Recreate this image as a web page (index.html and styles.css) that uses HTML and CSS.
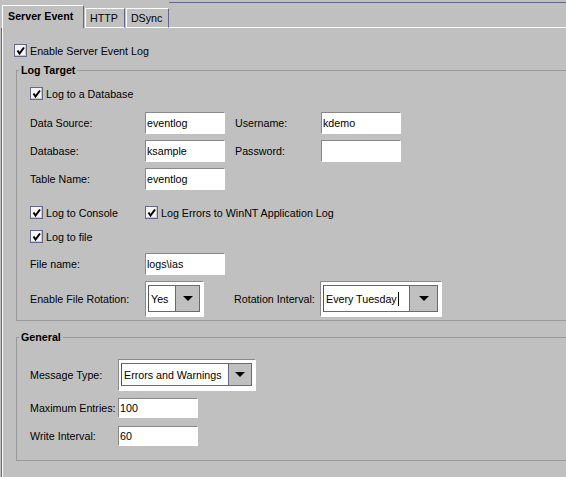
FILE: index.html
```html
<!DOCTYPE html>
<html lang="en">
<head>
    <meta charset="UTF-8">
    <title>Server Event</title>
    <link rel="stylesheet" href="styles.css">
</head>
<body>
    <div class="tabs">
        <div class="tab active">Server Event</div>
        <div class="tab">HTTP</div>
        <div class="tab">DSync</div>
        <div class="tab-fill"></div>
    </div>

    <div class="panel">
        <div class="check enable-log">
            <span class="box"><svg viewBox="0 0 11 11" width="11" height="11"><polyline points="2.5,5.5 4.5,8.5 9,2.5" /></svg></span>
            Enable Server Event Log
        </div>

        <div class="group log-target">
            <div class="group-title">Log Target</div>

            <div class="check db-check">
                <span class="box"><svg viewBox="0 0 11 11" width="11" height="11"><polyline points="2.5,5.5 4.5,8.5 9,2.5" /></svg></span>
                Log to a Database
            </div>

            <div class="form-grid">
                <span class="label">Data Source:</span>
                <input class="field" type="text" value="eventlog">
                <span class="label">Username:</span>
                <input class="field" type="text" value="kdemo">

                <span class="label">Database:</span>
                <input class="field" type="text" value="ksample">
                <span class="label">Password:</span>
                <input class="field" type="text" value="">

                <span class="label">Table Name:</span>
                <input class="field" type="text" value="eventlog">
            </div>

            <div class="check-row">
                <div class="check console-check">
                    <span class="box"><svg viewBox="0 0 11 11" width="11" height="11"><polyline points="2.5,5.5 4.5,8.5 9,2.5" /></svg></span>
                    Log to Console
                </div>
                <div class="check">
                    <span class="box"><svg viewBox="0 0 11 11" width="11" height="11"><polyline points="2.5,5.5 4.5,8.5 9,2.5" /></svg></span>
                    Log Errors to WinNT Application Log
                </div>
            </div>

            <div class="check file-check">
                <span class="box"><svg viewBox="0 0 11 11" width="11" height="11"><polyline points="2.5,5.5 4.5,8.5 9,2.5" /></svg></span>
                Log to file
            </div>

            <div class="row file-row">
                <span class="label wide">File name:</span>
                <input class="field" type="text" value="logs\ias">
            </div>

            <div class="row combo-row">
                <span class="label wide">Enable File Rotation:</span>
                <div class="combo-frame yes-combo">
                    <div class="combo">
                        <span class="combo-text">Yes</span>
                        <span class="combo-btn"><span class="arrow"></span></span>
                    </div>
                </div>
                <span class="label rotation-label">Rotation Interval:</span>
                <div class="combo-frame rotation-combo">
                    <div class="combo">
                        <span class="combo-text">Every Tuesday<span class="caret"></span></span>
                        <span class="combo-btn"><span class="arrow"></span></span>
                    </div>
                </div>
            </div>
        </div>

        <div class="group general">
            <div class="group-title">General</div>

            <div class="row message-row">
                <span class="label short">Message Type:</span>
                <div class="combo-frame message-combo">
                    <div class="combo">
                        <span class="combo-text">Errors and Warnings</span>
                        <span class="combo-btn"><span class="arrow"></span></span>
                    </div>
                </div>
            </div>

            <div class="row entries-row">
                <span class="label short">Maximum Entries:</span>
                <input class="field small" type="text" value="100">
            </div>

            <div class="row interval-row">
                <span class="label short">Write Interval:</span>
                <input class="field small" type="text" value="60">
            </div>
        </div>
    </div>
</body>
</html>
```

FILE: styles.css
```css
body {
    margin: 0;
    width: 566px;
    height: 477px;
    overflow: hidden;
    background-color: #c0c0c0;
    font-family: "Liberation Sans", Arial, sans-serif;
    font-size: 10.7px;
    color: #000;
}

/* tab strip */
.tabs {
    display: flex;
    align-items: flex-end;
    height: 28px;
    padding-left: 2px;
}
.tab {
    box-sizing: border-box;
    height: 20px;
    line-height: 18px;
    padding: 0 6px 0 4px;
    border-top: 1px solid #fff;
    border-left: 1px solid #fff;
    border-right: 1px solid #66668a;
    border-bottom: 1px solid #fff;
}
.tab.active {
    height: 23px;
    line-height: 20px;
    width: 82px;
    padding-left: 5px;
    font-weight: bold;
    border-bottom: none;
}
.tab + .tab {
    margin-left: 1px;
}
.tab-fill {
    flex: 1;
    box-sizing: border-box;
    height: 26px;
    border-top: 1px solid #66668a;
    border-bottom: 1px solid #fff;
}

/* tab body */
.panel {
    margin-left: 1px;
    height: 449px;
    border-left: 1px solid #66668a;
    box-shadow: inset 1px 0 #fff;
    padding-left: 1px;
    display: flex;
    flex-direction: column;
}

/* checkboxes */
.check {
    display: flex;
    align-items: center;
    gap: 3px;
    height: 13px;
    white-space: nowrap;
}
.box {
    box-sizing: border-box;
    width: 13px;
    height: 13px;
    border: 1px solid #66668a;
    background-color: #f4f4f4;
    box-shadow: inset -1px -1px #c8c8c8;
    display: flex;
}
.box polyline {
    fill: none;
    stroke: #000;
    stroke-width: 2;
}
.enable-log {
    margin: 16px 0 0 11px;
}

/* titled groups */
.group {
    display: flex;
    flex-direction: column;
    margin: 13px 0 0 13px;
    padding-left: 13px;
    border: 1px solid #999;
    border-right: none;
}
.group-title {
    align-self: flex-start;
    margin: -7px 0 0 -11px;
    padding: 0 2px;
    line-height: 13px;
    font-weight: bold;
    background-color: #c0c0c0;
}
.log-target {
    padding-bottom: 3px;
}
.general {
    margin-top: 16px;
    padding-bottom: 14px;
}

.db-check {
    margin-top: 10px;
}
.form-grid {
    display: grid;
    grid-template-columns: 115px 90px 86px 80px;
    grid-auto-rows: 22px;
    row-gap: 6px;
    align-items: center;
    margin-top: 12px;
}
.check-row {
    display: flex;
    margin-top: 16px;
}
.console-check {
    width: 115px;
}
.file-check {
    margin-top: 11px;
}

/* label + control rows */
.row {
    display: flex;
    align-items: center;
}
.label {
    white-space: nowrap;
}
.label.wide {
    width: 115px;
}
.label.short {
    width: 88px;
}
.file-row {
    margin-top: 10px;
}
.combo-row {
    margin-top: 6px;
}
.rotation-label {
    width: 86px;
    margin-left: 30px;
}
.message-row {
    margin-top: 15px;
}
.entries-row {
    margin-top: 7px;
}
.interval-row {
    margin-top: 8px;
}

/* text fields */
.field {
    box-sizing: border-box;
    width: 80px;
    height: 22px;
    margin: 0;
    padding: 0 1px;
    border: 1px solid #fff;
    border-top-color: #888;
    border-left-color: #888;
    background-color: #fff;
    font: inherit;
    color: #000;
    outline: none;
}
.field.small {
    height: 20px;
}

/* combo boxes */
.combo-frame {
    box-sizing: border-box;
    height: 36px;
    padding: 3px 3px 4px 2px;
    border: 1px solid #fff;
    border-top-color: #8a8a8a;
    border-left-color: #8a8a8a;
    background-color: #fff;
    display: flex;
}
.combo {
    flex: 1;
    display: flex;
    border: 1px solid #66668a;
    border-left-color: #555;
}
.combo-text {
    flex: 1;
    display: flex;
    align-items: center;
    padding-left: 2px;
    background-color: #fff;
    white-space: nowrap;
}
.combo-btn {
    width: 27px;
    display: flex;
    align-items: center;
    justify-content: center;
    border-left: 1px solid #66668a;
    background-color: #c0c0c0;
}
.arrow {
    width: 0;
    height: 0;
    border-left: 5px solid transparent;
    border-right: 5px solid transparent;
    border-top: 5px solid #000;
}
.caret {
    width: 1px;
    height: 14px;
    margin-left: 1px;
    background-color: #000;
}
.yes-combo {
    width: 59px;
}
.yes-combo .combo-btn {
    width: 23px;
}
.rotation-combo {
    width: 122px;
}
.message-combo {
    width: 138px;
    height: 32px;
}
.message-combo .combo-btn {
    width: 22px;
}
```
